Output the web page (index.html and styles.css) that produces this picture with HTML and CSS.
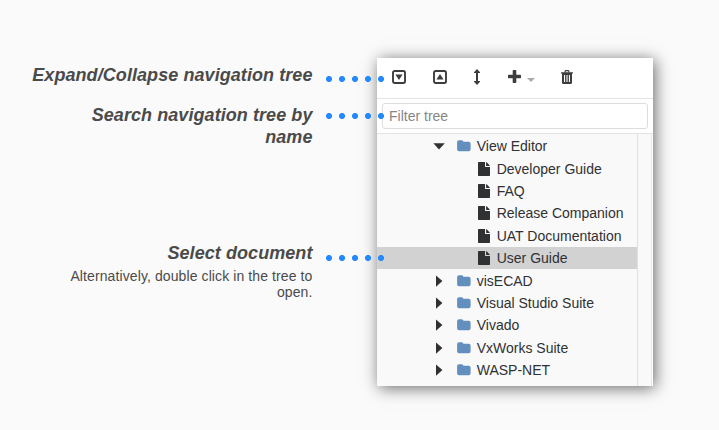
FILE: index.html
```html
<!DOCTYPE html>
<html lang="en">
<head>
<meta charset="utf-8">
<title>Navigation tree guide</title>
<link rel="stylesheet" href="styles.css">
</head>
<body>
<svg width="0" height="0" class="defs">
  <symbol id="folder" viewBox="0 0 14 12"><path fill="#638fbe" d="M2 .2h2.700a1.800 1.800 0 0 1 1.700 1.600h5.300a2 2 0 0 1 1.900 1.900v5.600a2 2 0 0 1-1.900 1.900H2a2 2 0 0 1-1.900-1.900V2.100A2 2 0 0 1 2 .2z"/></symbol>
  <symbol id="file" viewBox="0 0 12 14"><path fill="#303133" d="M1 0h6v4.200c0 .6.3.9.9.9H12V13c0 .6-.3 1-1 1H1c-.6 0-1-.4-1-1V1c0-.6.4-1 1-1zM8.100.1c.3.1.6.3.8.5l2.400 2.400c.3.3.5.6.6.9H8.100z"/></symbol>
  <symbol id="right" viewBox="0 0 12 12"><path fill="#303133" d="M3 .4v11.400L9.400 6z"/></symbol>
  <symbol id="down" viewBox="0 0 12 12"><path fill="#303133" d="M.4 3.300h11.400L6 9.600z"/></symbol>
</svg>
<main class="guide">
  <section class="notes">
    <div class="note expand"><h2>Expand/Collapse navigation tree</h2></div>
    <div class="note search"><h2>Search navigation tree by name</h2></div>
    <div class="note select"><h2>Select document</h2><p>Alternatively, double click in the tree to open.</p></div>
  </section>
  <section class="panel">
    <div class="toolbar">
      <svg class="box" viewBox="0 0 14 14"><rect x="1" y="1" width="12" height="12" rx="1.7" fill="none" stroke="#3d3d3f" stroke-width="1.900"/><path fill="#3d3d3f" d="M3.400 4.500h7.200L7 10z"/></svg>
      <svg class="box" viewBox="0 0 14 14"><rect x="1" y="1" width="12" height="12" rx="1.7" fill="none" stroke="#3d3d3f" stroke-width="1.900"/><path fill="#3d3d3f" d="M3.400 9.500h7.200L7 4z"/></svg>
      <svg class="resize" viewBox="0 0 6 16"><path fill="#3d3d3f" d="M3 0l3 3.200v.8H4v8h2v.8L3 16 0 12.800V12h2V4H0v-.8z"/></svg>
      <svg class="plus" viewBox="0 0 13 13"><path fill="#3d3d3f" d="M5.500 0h2q.8 0 .8.8v3.900h3.900q.8 0 .8.8v2q0 .8-.8.8H8.300v3.900q0 .8-.8.8h-2q-.8 0-.8-.8V8.300H.8Q0 8.300 0 7.500v-2q0-.8.8-.8h3.900V.8q0-.8.8-.8z"/></svg>
      <svg class="caret" viewBox="0 0 8 4"><path fill="#aaa" d="M0 0h8L4 4z"/></svg>
      <svg class="trash" viewBox="0 0 12 14"><path fill="none" stroke="#3d3d3f" stroke-width="1.200" d="M3.800 2.500l.5-1.400q.1-.4.6-.4h2.200q.5 0 .6.4l.5 1.400"/><path fill="#3d3d3f" fill-rule="evenodd" d="M0 2.300h12v1.200h-1v9q0 1.500-1.300 1.500H2.300Q1 14 1 12.500v-9H0zM3 5v7h1.100V5zM5.450 5v7h1.100V5zM7.900 5v7H9V5z"/></svg>
    </div>
    <div class="filter"><div class="field">Filter tree</div></div>
    <div class="body">
      <div class="tree">
        <div class="row"><svg class="arrow"><use href="#down"/></svg><svg class="folder"><use href="#folder"/></svg><span>View Editor</span></div>
        <div class="row doc"><svg class="file"><use href="#file"/></svg><span>Developer Guide</span></div>
        <div class="row doc"><svg class="file"><use href="#file"/></svg><span>FAQ</span></div>
        <div class="row doc"><svg class="file"><use href="#file"/></svg><span>Release Companion</span></div>
        <div class="row doc"><svg class="file"><use href="#file"/></svg><span>UAT Documentation</span></div>
        <div class="row doc current"><svg class="file"><use href="#file"/></svg><span>User Guide</span></div>
        <div class="row"><svg class="arrow"><use href="#right"/></svg><svg class="folder"><use href="#folder"/></svg><span>visECAD</span></div>
        <div class="row"><svg class="arrow"><use href="#right"/></svg><svg class="folder"><use href="#folder"/></svg><span>Visual Studio Suite</span></div>
        <div class="row"><svg class="arrow"><use href="#right"/></svg><svg class="folder"><use href="#folder"/></svg><span>Vivado</span></div>
        <div class="row"><svg class="arrow"><use href="#right"/></svg><svg class="folder"><use href="#folder"/></svg><span>VxWorks Suite</span></div>
        <div class="row"><svg class="arrow"><use href="#right"/></svg><svg class="folder"><use href="#folder"/></svg><span>WASP-NET</span></div>
      </div>
      <div class="track"></div>
    </div>
  </section>
</main>
</body>
</html>
```

FILE: styles.css
```css
* { box-sizing: border-box; }
body { margin: 0; background: #fafafa; font-family: "Liberation Sans", Arial, sans-serif; }
.defs { position: absolute; }
.guide { display: flex; align-items: flex-start; width: 719px; height: 430px; overflow: hidden; }
.notes { width: 377px; padding: 64px 64.5px 0 20px; color: #4a4a4a; text-align: right; }
.note { position: relative; z-index: 1; }
.note::after {
  content: "";
  position: absolute;
  left: 306px;
  top: var(--dot-top);
  width: 65px;
  height: 6px;
  background: radial-gradient(circle at 3px 3px, #2389ff 2.7px, transparent 3.3px) 0 0 / 13px 6px repeat-x;
}
.expand { height: 40px; --dot-top: 12px; }
.search { height: 138px; padding-left: 60px; --dot-top: 9px; }
.select { --dot-top: 13px; padding-left: 40px; }
h2 { margin: 0; font-size: 18px; line-height: 22px; font-style: italic; font-weight: bold; letter-spacing: .07px; }
p { margin: 4px 0 0; font-size: 14px; line-height: 16px; letter-spacing: .1px; }
.panel { width: 275.5px; height: 328px; margin-top: 58px; background: #fff; box-shadow: 2px 2px 15px rgba(0, 0, 0, .58); }
.toolbar { display: flex; align-items: flex-start; height: 41px; padding: 12px 0 0 15px; border-bottom: 1px solid #e4e4e4; }
.box { width: 14px; height: 14px; margin-right: 27px; }
.resize { width: 6px; height: 16px; margin: -1px 28px 0 0; }
.plus { width: 13px; height: 13px; margin-right: 6px; }
.caret { width: 8px; height: 4px; margin: 8px 26px 0 0; }
.trash { width: 12px; height: 14px; }
.filter { height: 35px; padding: 4px 5px; border-bottom: 1px solid #e2e2e2; }
.field { height: 26px; padding-left: 6px; border: 1px solid #ddd; border-radius: 3px; font-size: 14px; line-height: 25px; color: #868686; }
.body { display: flex; width: 275px; height: 252px; background: #f9f9f9; }
.tree { flex: 1; padding-top: 1px; border-right: 1px solid #e0e0e0; }
.track { width: 14px; border-right: 1px solid #e8e8e8; }
.row { display: flex; align-items: center; height: 22.4px; padding-left: 56px; color: #303133; font-size: 14px; white-space: nowrap; }
.doc { padding-left: 101px; }
.current { background: #d2d2d2; }
.arrow { width: 12px; height: 12px; margin-right: 12px; }
.folder { width: 14px; height: 12px; margin-right: 5.7px; }
.file { width: 12px; height: 14px; margin: 0 6.7px 0 0; }
```
